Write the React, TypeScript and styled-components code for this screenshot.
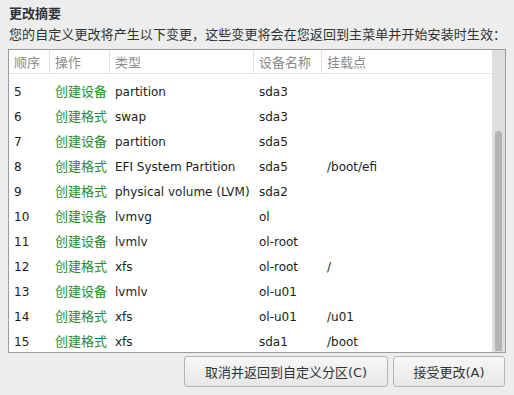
import React from "react";
import styled, { createGlobalStyle } from "styled-components";

const Global = createGlobalStyle`
  html, body { margin: 0; padding: 0; background: #ededed; }
  body { width: 514px; height: 395px; overflow: hidden; }
`;

const Screen = styled.div`
  width: 514px;
  height: 395px;
  display: flex;
  background: #ededed;
`;

const LeftEdge = styled.div`
  width: 1px;
  background: linear-gradient(to bottom, #9a9a9a 0, #9a9a9a 103px, #3d6aa0 103px, #3d6aa0 140px, #9a9a9a 140px, #9a9a9a 345px, #cfcfcf 345px);
`;

const RightEdge = styled.div`
  width: 3px;
  background: linear-gradient(to bottom, #707070 0, #707070 10px, #2f2f2f 10px, #2f2f2f 16px, #707070 16px, #707070 54px, #c8c8c8 54px, #c8c8c8 56px, #707070 56px);
`;

const Dialog = styled.div`
  flex: 1;
  display: flex;
  flex-direction: column;
  padding: 4px 8px 0 8px;
  font-family: "Noto Sans CJK SC", "DejaVu Sans", sans-serif;
  color: #2e3436;
`;

const Title = styled.div`
  font-size: 13px;
  font-weight: 700;
  line-height: 17px;
  height: 17px;
  padding-left: 1px;
`;

const Subtitle = styled.div`
  font-size: 13px;
  line-height: 17px;
  margin-top: 4px;
  padding-left: 1px;
  white-space: nowrap;
  letter-spacing: 0.08px;
`;

const TableBox = styled.div`
  margin-top: 7px;
  height: 302px;
  border: 1px solid #9c9c9c;
  background: #ffffff;
  display: flex;
  overflow: hidden;
`;

const ListArea = styled.div`
  flex: 1;
  display: flex;
  flex-direction: column;
  overflow: hidden;
`;

const Header = styled.div`
  display: grid;
  grid-template-columns: 40px 60px 144px 68px 1fr;
  height: 23px;
  border-bottom: 1px solid #e4e4e4;
  flex-shrink: 0;
`;

const HeadCell = styled.div<{ $sep?: boolean }>`
  font-family: "Noto Sans CJK SC", sans-serif;
  font-size: 13px;
  color: #8b8b8b;
  line-height: 23px;
  padding-left: 5px;
  border-left: ${(p) => (p.$sep ? "1px solid #e2e2e2" : "none")};
  white-space: nowrap;
`;

const Body = styled.div`
  flex: 1;
  overflow: hidden;
  padding-top: 6px;
`;

const Row = styled.div`
  display: grid;
  grid-template-columns: 40px 60px 144px 68px 1fr;
  height: 25px;
`;

const Cell = styled.div<{ $green?: boolean; $sep?: boolean }>`
  font-family: ${(p) =>
    p.$green ? '"Noto Sans CJK SC", sans-serif' : '"DejaVu Sans", "Noto Sans CJK SC", sans-serif'};
  font-size: ${(p) => (p.$green ? 13 : 12)}px;
  color: ${(p) => (p.$green ? "#2a8c2a" : "#1c1c1c")};
  line-height: ${(p) => (p.$green ? 22 : 25)}px;
  padding-left: ${(p) => (p.$sep ? 6 : 5)}px;
  white-space: nowrap;
`;

const Scrollbar = styled.div`
  width: 13px;
  background: #dedede;
  display: flex;
  justify-content: center;
  padding-top: 81px;
  box-sizing: border-box;
  flex-shrink: 0;
`;

const Thumb = styled.div`
  width: 7px;
  height: 220px;
  background: #b4b4b4;
  border-radius: 4px 4px 0 0;
`;

const Buttons = styled.div`
  display: flex;
  justify-content: flex-end;
  gap: 5px;
  margin-top: 3px;
  padding-right: 1px;
`;

const Button = styled.button<{ $w: number }>`
  width: ${(p) => p.$w}px;
  height: 31px;
  border: 1px solid #b5b5b5;
  border-radius: 3px;
  background: linear-gradient(to bottom, #f7f7f7, #e7e7e7);
  font-family: "DejaVu Sans", "Noto Sans CJK SC", sans-serif;
  font-size: 13px;
  color: #2e3436;
  padding: 0;
  box-sizing: border-box;
`;

type Item = { n: number; op: string; type: string; dev: string; mount: string };

const items: Item[] = [
  { n: 5, op: "创建设备", type: "partition", dev: "sda3", mount: "" },
  { n: 6, op: "创建格式", type: "swap", dev: "sda3", mount: "" },
  { n: 7, op: "创建设备", type: "partition", dev: "sda5", mount: "" },
  { n: 8, op: "创建格式", type: "EFI System Partition", dev: "sda5", mount: "/boot/efi" },
  { n: 9, op: "创建格式", type: "physical volume (LVM)", dev: "sda2", mount: "" },
  { n: 10, op: "创建设备", type: "lvmvg", dev: "ol", mount: "" },
  { n: 11, op: "创建设备", type: "lvmlv", dev: "ol-root", mount: "" },
  { n: 12, op: "创建格式", type: "xfs", dev: "ol-root", mount: "/" },
  { n: 13, op: "创建设备", type: "lvmlv", dev: "ol-u01", mount: "" },
  { n: 14, op: "创建格式", type: "xfs", dev: "ol-u01", mount: "/u01" },
  { n: 15, op: "创建格式", type: "xfs", dev: "sda1", mount: "/boot" },
];

export default function App() {
  return (
    <>
      <Global />
      <Screen>
        <LeftEdge />
        <Dialog>
          <Title>更改摘要</Title>
          <Subtitle>您的自定义更改将产生以下变更，这些变更将会在您返回到主菜单并开始安装时生效：</Subtitle>
          <TableBox>
            <ListArea>
              <Header>
                <HeadCell>顺序</HeadCell>
                <HeadCell $sep>操作</HeadCell>
                <HeadCell $sep>类型</HeadCell>
                <HeadCell $sep>设备名称</HeadCell>
                <HeadCell $sep>挂载点</HeadCell>
              </Header>
              <Body>
                {items.map((it) => (
                  <Row key={it.n}>
                    <Cell>{it.n}</Cell>
                    <Cell $green $sep>{it.op}</Cell>
                    <Cell $sep>{it.type}</Cell>
                    <Cell $sep>{it.dev}</Cell>
                    <Cell $sep>{it.mount}</Cell>
                  </Row>
                ))}
              </Body>
            </ListArea>
            <Scrollbar>
              <Thumb />
            </Scrollbar>
          </TableBox>
          <Buttons>
            <Button $w={204}>取消并返回到自定义分区(C)</Button>
            <Button $w={112}>接受更改(A)</Button>
          </Buttons>
        </Dialog>
        <RightEdge />
      </Screen>
    </>
  );
}
